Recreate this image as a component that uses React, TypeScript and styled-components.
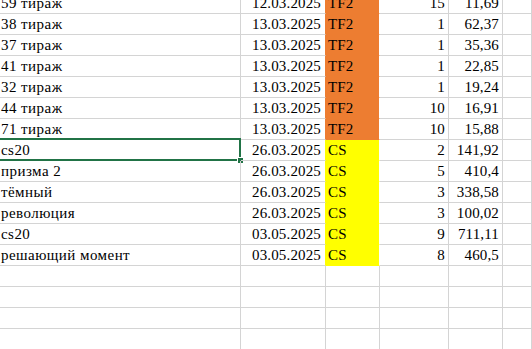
import styled, { createGlobalStyle } from "styled-components";

const GlobalStyle = createGlobalStyle`
  html, body {
    margin: 0;
    padding: 0;
    background: #ffffff;
    overflow: hidden;
    font-family: "Liberation Serif", serif;
  }
`;

const GRID = "#d4d4d4";
const ORANGE = "#ed7d31";
const YELLOW = "#ffff00";

const Sheet = styled.div`
  margin-top: -7px;
  width: 532px;
  font-family: "Liberation Serif", serif;
  font-size: 15px;
  color: #000;
`;

const Row = styled.div`
  display: grid;
  grid-template-columns: 241px 85px 54px 69px 54px 1fr;
  height: 21px;
`;

const Cell = styled.div<{ $align?: "left" | "right"; $fill?: string; $edge?: string }>`
  position: relative;
  box-sizing: border-box;
  height: 21px;
  padding: 1px ${(p) => (p.$align === "right" ? "3px" : "0")} 0
    ${(p) => (p.$align === "right" ? "0" : "2px")};
  line-height: 19px;
  letter-spacing: 0.15px;
  white-space: nowrap;
  text-align: ${(p) => p.$align ?? "left"};
  background: ${(p) => p.$fill ?? "transparent"};
  border-right: 1px solid ${(p) => p.$edge ?? GRID};
  border-bottom: 1px solid ${(p) => p.$fill ?? GRID};
`;

const NameCell = styled(Cell)`
  padding-left: 1px;
  letter-spacing: 0.45px;
`;

const DateCell = styled(Cell)`
  padding-right: 4px;
`;

// active cell frame with the fill handle in its corner
const Selection = styled.div`
  position: absolute;
  top: -2px;
  left: -2px;
  right: -1px;
  bottom: -1px;
  border: 2px solid #217346;
  pointer-events: none;

  &::after {
    content: "";
    position: absolute;
    right: -4px;
    bottom: -4px;
    width: 5px;
    height: 5px;
    background: #217346;
    box-shadow: 0 0 0 1px #ffffff;
  }
`;

type Entry = {
  name: string;
  date: string;
  game: string;
  qty: number;
  price: string;
};

const rows: Entry[] = [
  { name: "59 тираж", date: "12.03.2025", game: "TF2", qty: 15, price: "11,69" },
  { name: "38 тираж", date: "13.03.2025", game: "TF2", qty: 1, price: "62,37" },
  { name: "37 тираж", date: "13.03.2025", game: "TF2", qty: 1, price: "35,36" },
  { name: "41 тираж", date: "13.03.2025", game: "TF2", qty: 1, price: "22,85" },
  { name: "32 тираж", date: "13.03.2025", game: "TF2", qty: 1, price: "19,24" },
  { name: "44 тираж", date: "13.03.2025", game: "TF2", qty: 10, price: "16,91" },
  { name: "71 тираж", date: "13.03.2025", game: "TF2", qty: 10, price: "15,88" },
  { name: "cs20", date: "26.03.2025", game: "CS", qty: 2, price: "141,92" },
  { name: "призма 2", date: "26.03.2025", game: "CS", qty: 5, price: "410,4" },
  { name: "тёмный", date: "26.03.2025", game: "CS", qty: 3, price: "338,58" },
  { name: "революция", date: "26.03.2025", game: "CS", qty: 3, price: "100,02" },
  { name: "cs20", date: "03.05.2025", game: "CS", qty: 9, price: "711,11" },
  { name: "решающий момент", date: "03.05.2025", game: "CS", qty: 8, price: "460,5" },
];

const gameColor: Record<string, string> = {
  TF2: ORANGE,
  CS: YELLOW,
};

const EMPTY_ROWS = 4;
const ACTIVE_ROW = 7;

function App() {
  return (
    <>
      <GlobalStyle />
      <Sheet>
        {rows.map((r, i) => {
          const fill = gameColor[r.game];
          return (
            <Row key={i}>
              <NameCell>
                {r.name}
                {i === ACTIVE_ROW && <Selection />}
              </NameCell>
              <DateCell $align="right" $edge={fill}>
                {r.date}
              </DateCell>
              <Cell $fill={fill} $edge="#ffffff">
                {r.game}
              </Cell>
              <Cell $align="right">{r.qty}</Cell>
              <Cell $align="right">{r.price}</Cell>
              <Cell />
            </Row>
          );
        })}
        {Array.from({ length: EMPTY_ROWS }).map((_, i) => (
          <Row key={`empty-${i}`}>
            <Cell />
            <Cell />
            <Cell />
            <Cell />
            <Cell />
            <Cell />
          </Row>
        ))}
      </Sheet>
    </>
  );
}

export default App;
